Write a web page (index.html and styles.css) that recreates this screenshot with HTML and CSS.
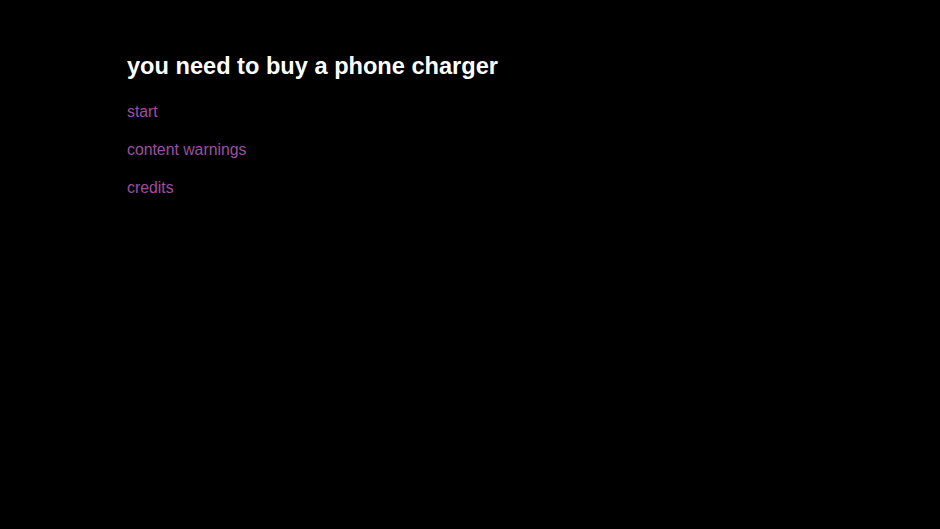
FILE: index.html
```html
<!DOCTYPE html>
<html>
<head>
<meta charset="utf-8">
<link rel="stylesheet" href="styles.css">
</head>
<body>
<div class="page">
  <h1 class="title">you need to buy a phone charger</h1>
  <ul class="menu">
    <li><a class="link" href="#">start</a></li>
    <li><a class="link" href="#">content warnings</a></li>
    <li><a class="link" href="#">credits</a></li>
  </ul>
</div>
</body>
</html>
```
FILE: styles.css
```css
html, body {
  margin: 0;
  padding: 0;
  background: #000;
  height: 100%;
}
body {
  font-family: "Liberation Sans", Arial, sans-serif;
}
.page {
  padding: 52px 0 0 127px;
}
.title {
  margin: 0;
  font-size: 23.6px;
  font-weight: bold;
  color: #fff;
  line-height: 28px;
}
.menu {
  list-style: none;
  margin: 23px 0 0 0;
  padding: 0;
  display: flex;
  flex-direction: column;
  gap: 20px;
}
.menu li {
  line-height: 18px;
}
.link {
  color: #9e4ea3;
  text-decoration: none;
  font-size: 15.8px;
}
```
